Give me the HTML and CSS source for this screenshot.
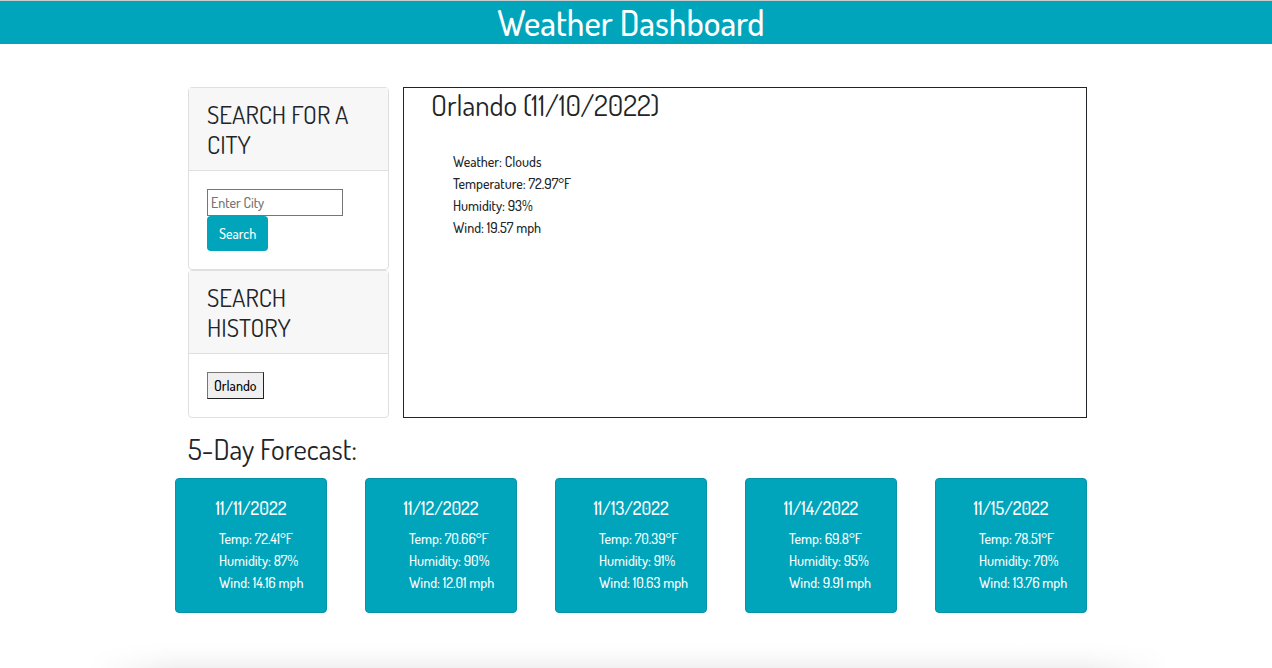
FILE: index.html
```html
<!DOCTYPE html>
<html lang="en">
<head>
<meta charset="utf-8">
<meta name="viewport" content="width=device-width, initial-scale=1">
<title>Weather Dashboard</title>
<link rel="stylesheet" href="styles.css">
</head>
<body>
<header class="banner"><h1 class="banner-title">Weather Dashboard</h1></header>
<main class="dashboard">
  <div class="overview">
    <aside class="sidebar">
      <section class="card">
        <h2 class="card-header"><label for="city">SEARCH FOR A CITY</label></h2>
        <form class="card-body">
          <input class="city-input" id="city" type="text" placeholder="Enter City">
          <button class="search-button" type="submit">Search</button>
        </form>
      </section>
      <section class="card">
        <h2 class="card-header">SEARCH HISTORY</h2>
        <div class="card-body"><button class="history-button" type="button">Orlando</button></div>
      </section>
    </aside>
    <section class="current">
      <h2 class="section-title">Orlando (11/10/2022)</h2>
      <ul class="readings current-readings">
        <li>Weather: Clouds</li>
        <li>Temperature: 72.97°F</li>
        <li>Humidity: 93%</li>
        <li>Wind: 19.57 mph</li>
      </ul>
    </section>
  </div>
  <h2 class="section-title forecast-title">5-Day Forecast:</h2>
  <div class="forecast">
    <article class="day"><h3 class="day-date">11/11/2022</h3><ul class="readings day-readings"><li>Temp: 72.41°F</li><li>Humidity: 87%</li><li>Wind: 14.16 mph</li></ul></article>
    <article class="day"><h3 class="day-date">11/12/2022</h3><ul class="readings day-readings"><li>Temp: 70.66°F</li><li>Humidity: 90%</li><li>Wind: 12.01 mph</li></ul></article>
    <article class="day"><h3 class="day-date">11/13/2022</h3><ul class="readings day-readings"><li>Temp: 70.39°F</li><li>Humidity: 91%</li><li>Wind: 10.63 mph</li></ul></article>
    <article class="day"><h3 class="day-date">11/14/2022</h3><ul class="readings day-readings"><li>Temp: 69.8°F</li><li>Humidity: 95%</li><li>Wind: 9.91 mph</li></ul></article>
    <article class="day"><h3 class="day-date">11/15/2022</h3><ul class="readings day-readings"><li>Temp: 78.51°F</li><li>Humidity: 70%</li><li>Wind: 13.76 mph</li></ul></article>
  </div>
</main>
</body>
</html>
```
FILE: styles.css
```css
* { box-sizing: border-box; }

body {
  position: relative;
  min-height: 100vh;
  margin: 0;
  background: #fff;
  color: #212529;
  font-family: Dosis, Lato, sans-serif;
  font-size: 14px;
  font-weight: 500;
  line-height: 22px;
}

/* Soft shade along the lower edge of the page */
body::after {
  content: "";
  position: absolute;
  bottom: 0;
  left: 7%;
  right: 8%;
  height: 24px;
  background: linear-gradient(to top, #f1f1f1, #fafafa 50%, #fff);
  mask-image: linear-gradient(to right, transparent, #000 8%, #000 92%, transparent);
}

h1, h2, h3, ul { margin: 0; padding: 0; }

h2 { font-weight: 400; }

.banner {
  padding-right: 10px;
  border-top: 1px solid #c8cccd;
  background: #00a5bc;
  color: #fff;
  text-align: center;
}

.banner-title { font-size: 35px; font-weight: 500; line-height: 43px; }

.dashboard {
  width: 72%;
  min-width: 880px;
  max-width: 912px;
  margin: 43px auto 0;
  position: relative;
  right: 5px;
}

.overview { display: flex; gap: 14px; padding-left: 13px; }

.sidebar { flex: 0 0 201px; }

.card { border: 1px solid #dfdfdf; border-radius: 4px; }

.card-header {
  padding: 11px 18px;
  border-bottom: 1px solid #dfdfdf;
  background: #f7f7f7;
  font-size: 25px;
  line-height: 30px;
}

.card-body {
  display: flex;
  flex-direction: column;
  align-items: flex-start;
  padding: 18px;
}

.city-input, .search-button, .history-button { font: inherit; }

.city-input {
  width: 136px;
  height: 27px;
  padding: 1px 3px;
  border: 1px solid #767676;
  color: #212529;
}

.city-input::placeholder { color: #757575; }

.search-button {
  height: 35px;
  padding: 0 12px;
  border: 0;
  border-radius: 4px;
  background: #00a5bc;
  color: #fff;
}

.history-button {
  height: 27px;
  padding: 0 6px;
  border: 1px solid;
  border-color: #767676 #212121 #212121 #767676;
  background: #efefef;
  color: #000;
}

.current { flex: 1; border: 1px solid #212529; }

.section-title { padding-left: 27px; font-size: 29px; line-height: 34px; }

.forecast-title { margin: 14px 0 12px; padding-left: 13px; }

.readings { list-style: none; }

.current-readings { padding: 29px 0 0 49px; }

.forecast {
  display: grid;
  grid-template-columns: repeat(5, 1fr);
  gap: 38px;
}

.day {
  padding: 18px 0;
  border: 1px solid #0593a7;
  border-radius: 4px;
  background: #00a5bc;
  color: #fff;
}

.day-date {
  margin-bottom: 9px;
  font-size: 18px;
  font-weight: 500;
  line-height: 22px;
  text-align: center;
}

.day-readings { padding-left: 43px; }
```
